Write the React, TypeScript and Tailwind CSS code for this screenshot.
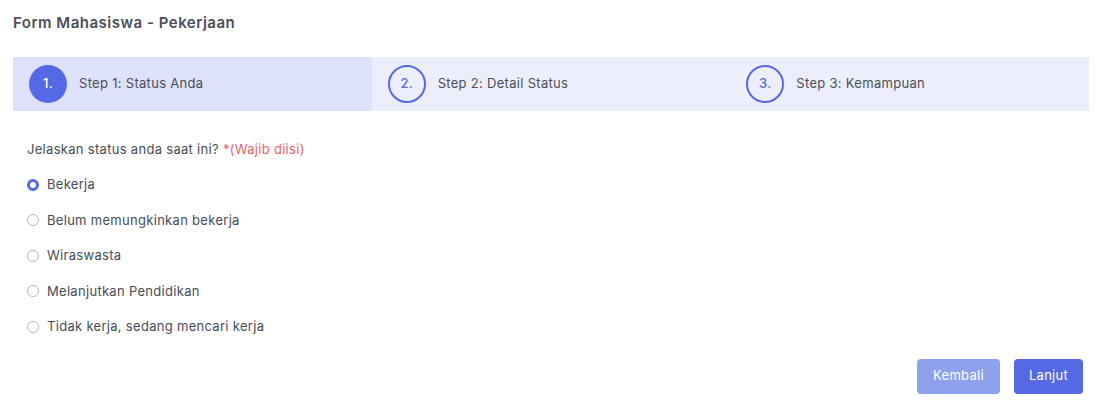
import React, { useState } from 'react';

const steps = [
  { no: '1.', label: 'Step 1: Status Anda' },
  { no: '2.', label: 'Step 2: Detail Status' },
  { no: '3.', label: 'Step 3: Kemampuan' },
];

const options = [
  'Bekerja',
  'Belum memungkinkan bekerja',
  'Wiraswasta',
  'Melanjutkan Pendidikan',
  'Tidak kerja, sedang mencari kerja',
];

export default function App() {
  const [current] = useState(0);
  const [status, setStatus] = useState('Bekerja');

  return (
    <div className="w-[1099px] h-[412px] bg-white text-[#464c57] font-['Inter',sans-serif] tracking-[0.3px]">
      {/* Header */}
      <div className="px-[13px] pt-[12px] h-[57px]">
        <h1 className="text-[15px] font-semibold text-[#4a4f59] leading-[22px] tracking-[0.5px]">Form Mahasiswa - Pekerjaan</h1>
      </div>

      {/* Stepper */}
      <div className="ml-[13px] mr-[10px] h-[54px] grid grid-cols-3 bg-[#eceffb]">
        {steps.map((s, i) => (
          <div
            key={s.no}
            className={`flex items-center pl-[16px] gap-[12px] ${i === current ? 'bg-[#dde1f9]' : ''}`}
          >
            <div
              className={`w-[38px] h-[38px] rounded-full flex items-center justify-center text-[13px] font-medium ${
                i === current ? 'bg-[#5469e3] text-white' : 'border-2 border-[#5469e3] text-[#5469e3]'
              }`}
            >
              {s.no}
            </div>
            <span className="text-[13px] text-[#4a4f59]">{s.label}</span>
          </div>
        ))}
      </div>

      {/* Question */}
      <div className="px-[27px] pt-[28px]">
        <p className="text-[13px] leading-[20px] text-[#464c57]">
          Jelaskan status anda saat ini? <span className="text-[#f0625f]">*(Wajib diisi)</span>
        </p>
        <div className="mt-[8px] flex flex-col">
          {options.map((o) => (
            <label key={o} className="flex items-center gap-[8px] h-[35.5px] cursor-pointer">
              <span
                className={`w-[12px] h-[12px] rounded-full ${
                  status === o ? 'border-[3.5px] border-[#5469e3]' : 'border border-[#b5b8bf]'
                }`}
                onClick={() => setStatus(o)}
              />
              <span className="text-[13px] text-[#464c57]">{o}</span>
            </label>
          ))}
        </div>
      </div>

      {/* Actions */}
      <div className="flex justify-end gap-[14px] pr-[16px] mt-[14px]">
        <button className="w-[83px] h-[35px] rounded-[4px] bg-[#8ea1ef] text-white text-[13px]">Kembali</button>
        <button className="w-[69px] h-[35px] rounded-[4px] bg-[#5469e3] text-white text-[13px]">Lanjut</button>
      </div>
    </div>
  );
}
